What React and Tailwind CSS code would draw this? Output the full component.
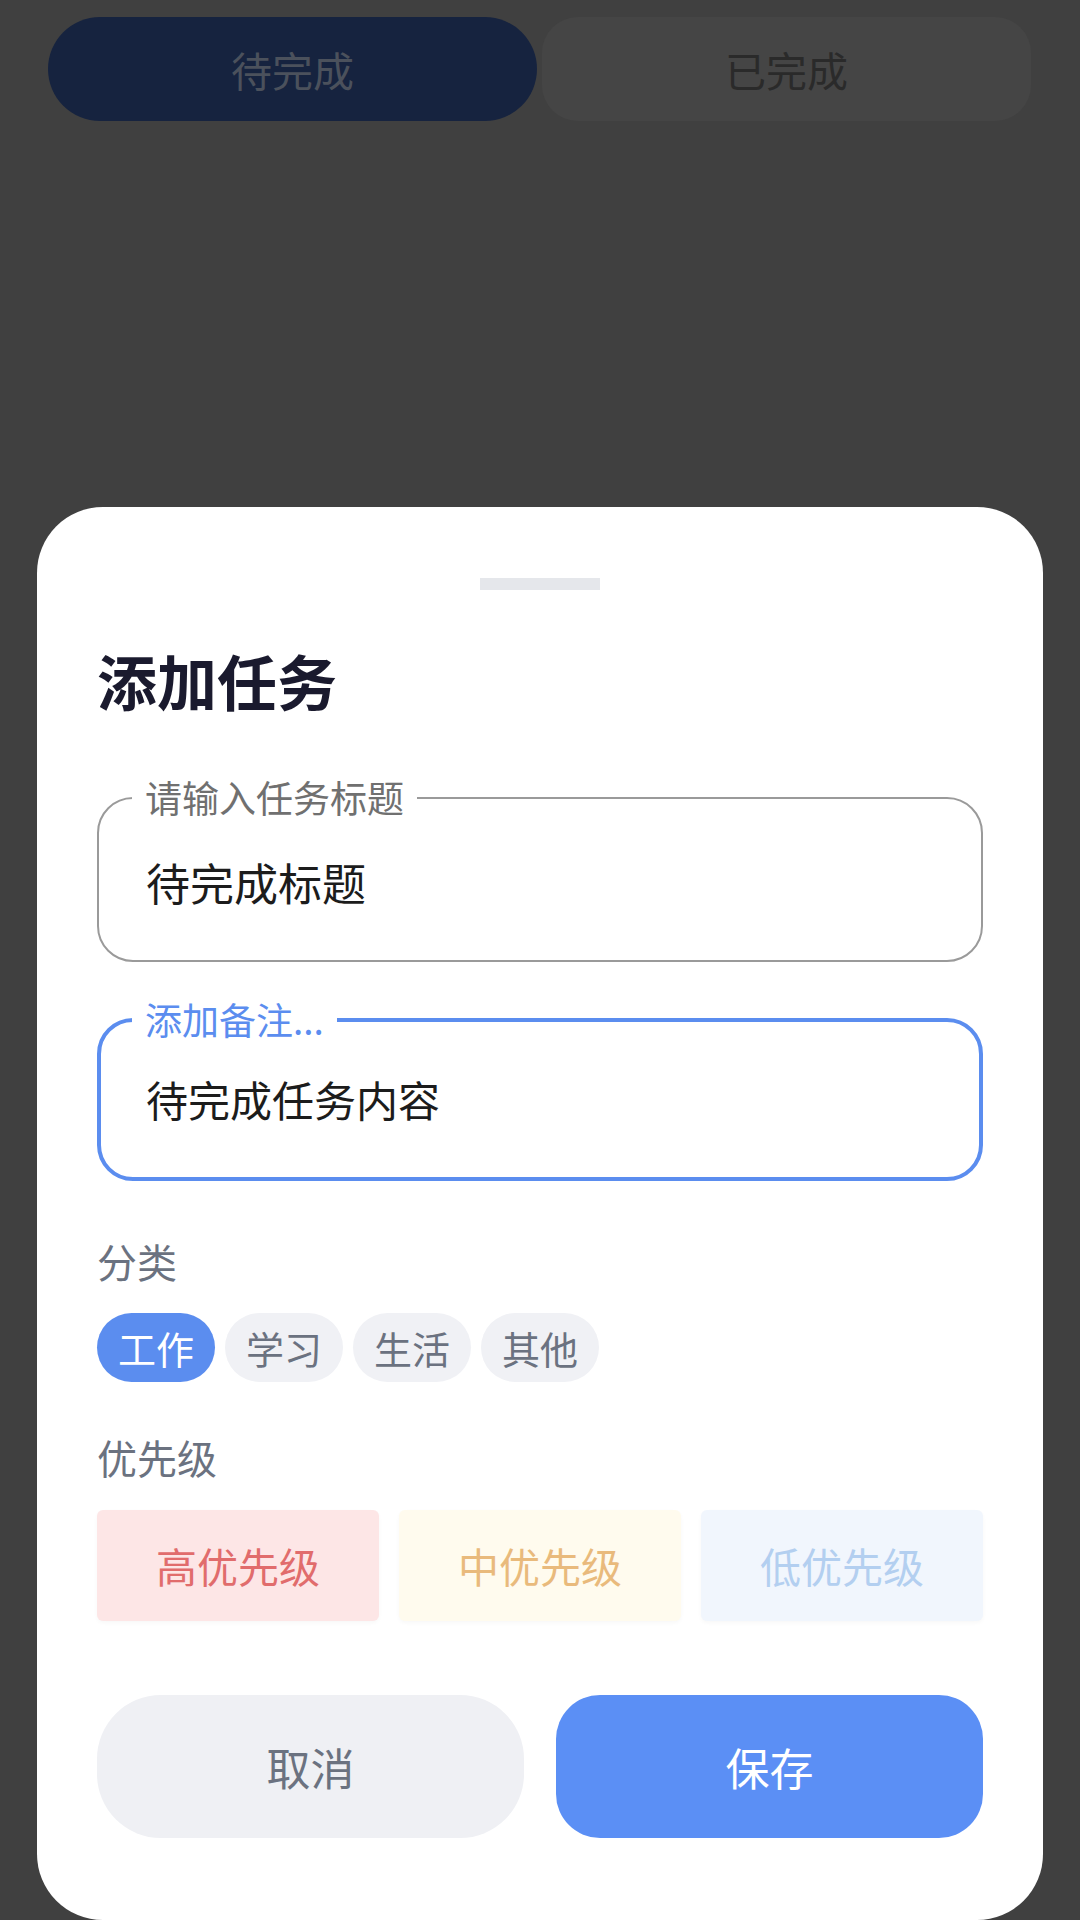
import React from "react";

export default function App() {
  const categories = ["工作", "学习", "生活", "其他"];
  const active = "工作";

  const priorities = [
    { label: "高优先级", cls: "bg-[#fde6e6] text-[#e16c6c]" },
    { label: "中优先级", cls: "bg-[#fffbee] text-[#e9ba7c]" },
    { label: "低优先级", cls: "bg-[#f1f6fd] text-[#b3cff0]" },
  ];

  return (
    <div className="h-[1920px] overflow-hidden bg-[#404040] flex flex-col font-['Noto_Sans_CJK_SC','Noto_Sans',sans-serif]">
      {/* tabs behind the dimmed overlay */}
      <div className="flex gap-[5px] pl-[48px] pr-[49px] pt-[17px]">
        <div className="flex-1 h-[104px] rounded-full bg-[#16233f] flex items-center justify-center text-[41px] leading-none text-[#4b515c]">
          待完成
        </div>
        <div className="flex-1 h-[104px] rounded-[36px] bg-[#454545] flex items-center justify-center text-[41px] leading-none text-[#2a2a2a]">
          已完成
        </div>
      </div>

      {/* bottom sheet */}
      <div className="mt-auto mx-[37px] h-[1413px] bg-white rounded-[66px] px-[60px] pt-[71px] flex flex-col">
        <div className="self-center w-[120px] h-[12px] bg-[#e5e7eb]" />

        <h1 className="mt-[60px] text-[60px] leading-none font-bold text-[#1a1a2e]">添加任务</h1>

        <fieldset className="mt-[69px] border-2 border-[#9a9a9a] rounded-[36px]">
          <legend className="ml-[33px] px-[13px] text-[37px] leading-none text-[#707070]">请输入任务标题</legend>
          <div className="h-[144px] pb-[12px] pl-[47px] flex items-center text-[44px] leading-none text-[#1c1c1c]">
            待完成标题
          </div>
        </fieldset>

        <fieldset className="mt-[39px] border-4 border-[#5b8def] rounded-[36px]">
          <legend className="ml-[31px] px-[13px] text-[37px] leading-none text-[#5b8def]">添加备注...</legend>
          <div className="h-[139px] pb-[18px] pl-[45px] flex items-center text-[42px] leading-none text-[#1c1c1c]">
            待完成任务内容
          </div>
        </fieldset>

        <div className="mt-[60px] text-[40px] leading-none text-[#6b7280]">分类</div>
        <div className="mt-[32px] flex gap-[10px]">
          {categories.map((c) => (
            <div
              key={c}
              className={
                c === active
                  ? "h-[69px] px-[21px] rounded-full bg-[#5b8def] text-white flex items-center text-[38px] leading-none"
                  : "h-[69px] px-[21px] rounded-full bg-[#f0f1f5] text-[#6b7280] flex items-center text-[38px] leading-none"
              }
            >
              {c}
            </div>
          ))}
        </div>

        <div className="mt-[55px] text-[40px] leading-none text-[#6b7280]">优先级</div>
        <div className="mt-[33px] grid grid-cols-3 gap-[20px]">
          {priorities.map((p) => (
            <div
              key={p.label}
              className={`h-[111px] rounded-[6px] flex items-center justify-center text-[41px] leading-none shadow-[0_2px_4px_rgba(0,0,0,0.03)] ${p.cls}`}
            >
              {p.label}
            </div>
          ))}
        </div>

        <div className="mt-[74px] grid grid-cols-2 gap-[32px]">
          <button
            type="button"
            className="h-[143px] rounded-[64px] bg-[#eff0f4] text-[#6b7280] text-[44px] leading-none"
          >
            取消
          </button>
          <button
            type="button"
            className="h-[143px] rounded-[44px] bg-[#5b8ff5] text-white text-[44px] leading-none"
          >
            保存
          </button>
        </div>
      </div>
    </div>
  );
}
